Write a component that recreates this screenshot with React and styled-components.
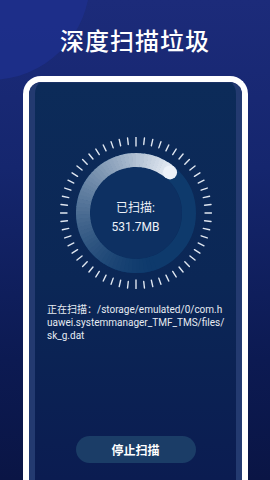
import React from "react";
import styled, { createGlobalStyle } from "styled-components";

const GlobalStyle = createGlobalStyle`
  html, body {
    margin: 0;
    padding: 0;
    background: #0a1545;
  }
  * {
    box-sizing: border-box;
  }
`;

const Page = styled.div`
  position: relative;
  width: 270px;
  height: 480px;
  overflow: hidden;
  display: flex;
  flex-direction: column;
  background: linear-gradient(180deg, #1c2b7a 0%, #15266e 35%, #0c1a52 75%, #0a1545 100%);
  font-family: Roboto, "Noto Sans CJK SC", sans-serif;

  &::before {
    content: "";
    position: absolute;
    left: -110px;
    top: -120px;
    width: 200px;
    height: 200px;
    border-radius: 50%;
    background: #1e3190;
    opacity: 0.7;
  }
`;

const Title = styled.h1`
  position: relative;
  margin: 0;
  padding: 28px 0 24px;
  text-align: center;
  color: #ffffff;
  font-size: 24px;
  line-height: 24px;
  font-weight: 500;
  letter-spacing: 1px;
  font-family: "Noto Sans CJK SC", sans-serif;
`;

const PhoneFrame = styled.div`
  position: relative;
  flex: 1;
  margin: 0 22px 0 23px;
  border: 6px solid #ffffff;
  border-bottom: none;
  border-radius: 18px 18px 0 0;
  overflow: hidden;
  display: flex;
`;

const Screen = styled.div`
  flex: 1;
  display: flex;
  flex-direction: column;
  align-items: center;
  border-left: 6px solid #233a70;
  border-right: 6px solid #233a70;
  border-top: 1px solid #1a3266;
  border-radius: 12px 12px 0 0;
  background: linear-gradient(180deg, #0c2b59 0%, #0b2756 50%, #0b1c51 100%);
  padding-top: 54px;
`;

const Dial = styled.div`
  display: grid;
  width: 152px;
  height: 152px;

  & > * {
    grid-area: 1 / 1;
  }
`;

const DialLabel = styled.div`
  display: flex;
  flex-direction: column;
  align-items: center;
  justify-content: center;
  gap: 5px;
  color: #eef2f8;
  font-size: 12px;
  line-height: 14px;
  padding-top: 8px;
`;

const PathText = styled.p`
  align-self: stretch;
  margin: 14px 0 0;
  padding: 0 11px 0 12px;
  color: #e6ebf2;
  font-size: 10px;
  line-height: 13px;
  word-break: break-all;
`;

const StopButton = styled.button`
  margin: auto 0 17px;
  width: 120px;
  height: 27px;
  border: none;
  border-radius: 14px;
  background: #1b3d67;
  color: #ffffff;
  font-size: 12px;
  font-weight: 700;
  font-family: "Noto Sans CJK SC", sans-serif;
`;

const C = 76;
const track = [14, 58, 108];
const white = [236, 241, 248];

const mix = (t) => {
  const e = Math.pow(t, 1.6);
  const c = track.map((v, i) => Math.round(v + (white[i] - v) * e));
  return `rgb(${c[0]},${c[1]},${c[2]})`;
};

const polar = (r, deg) => {
  const a = ((deg - 90) * Math.PI) / 180;
  return [C + r * Math.cos(a), C + r * Math.sin(a)];
};

const arcPath = (r, a0, a1) => {
  const [x0, y0] = polar(r, a0);
  const [x1, y1] = polar(r, a1);
  const large = Math.abs(a1 - a0) > 180 ? 1 : 0;
  return `M${x0} ${y0} A${r} ${r} 0 ${large} 1 ${x1} ${y1}`;
};

function DialDrawing() {
  const ticks = [];
  const count = 56;
  for (let i = 0; i < count; i++) {
    const deg = (360 / count) * i;
    const long = i === 0 || i === count / 2;
    const [x0, y0] = polar(long ? 67 : 69, deg);
    const [x1, y1] = polar(75.5, deg);
    ticks.push(
      <line key={i} x1={x0} y1={y0} x2={x1} y2={y1} stroke="#dfe6f0" strokeWidth="1.4" strokeLinecap="round" />
    );
  }

  const segs = [];
  const start = -200;
  const end = 40;
  const step = 4;
  for (let a = start; a < end; a += step) {
    const t = (a - start) / (end - start);
    segs.push(
      <path key={a} d={arcPath(53, a, Math.min(a + step + 0.6, end))} stroke={mix(t)} strokeWidth="14" fill="none" />
    );
  }
  const [cx, cy] = polar(53, end);

  return (
    <svg width="152" height="152" viewBox="0 0 152 152">
      <circle cx={C} cy={C} r="46" fill="#0d3062" />
      <circle cx={C} cy={C} r="53" stroke="rgb(14,58,108)" strokeWidth="14" fill="none" />
      {segs}
      <circle cx={cx} cy={cy} r="7" fill="rgb(236,241,248)" />
      {ticks}
    </svg>
  );
}

export default function App() {
  return (
    <>
      <GlobalStyle />
      <Page>
        <Title>深度扫描垃圾</Title>
        <PhoneFrame>
          <Screen>
            <Dial>
              <DialDrawing />
              <DialLabel>
                <span>已扫描:</span>
                <span>531.7MB</span>
              </DialLabel>
            </Dial>
            <PathText>
              正在扫描：/storage/emulated/0/com.huawei.systemmanager_TMF_TMS/files/sk_g.dat
            </PathText>
            <StopButton>停止扫描</StopButton>
          </Screen>
        </PhoneFrame>
      </Page>
    </>
  );
}
